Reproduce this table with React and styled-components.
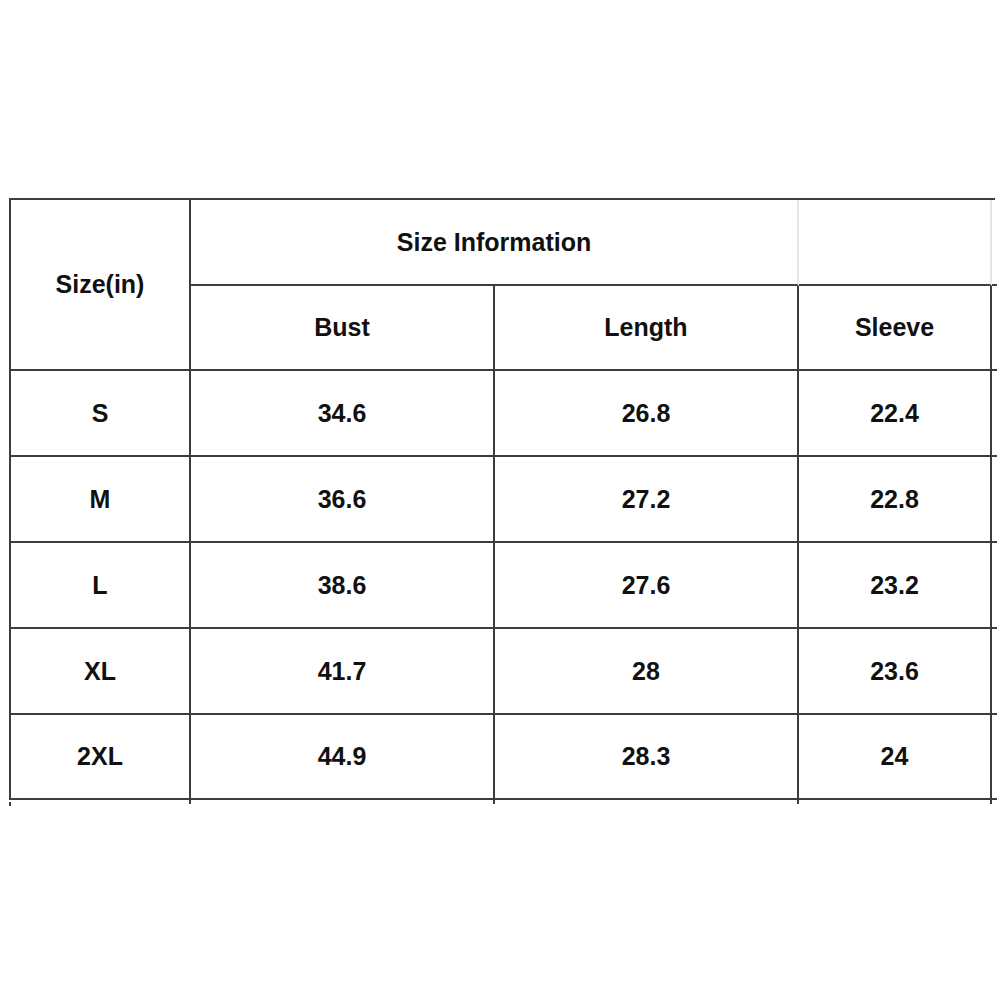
import React from 'react';
import styled, { createGlobalStyle } from 'styled-components';

const GlobalStyle = createGlobalStyle`
  html, body {
    margin: 0;
    padding: 0;
    background: #ffffff;
  }
  body {
    font-family: "Liberation Sans", Arial, sans-serif;
  }
`;

const LINE = '#3d3d3d';
const FAINT = '#e6e6e6';

const Page = styled.div`
  width: 1000px;
  height: 1000px;
  padding: 198px 0 0 9px;
  box-sizing: border-box;
  background: #fff;
`;

const Grid = styled.div`
  display: grid;
  grid-template-columns: 180px 304px 304px 193px;
  grid-template-rows: 86px 85px 86px 86px 86px 86px 85px;
  width: max-content;
  border-top: 2px solid ${LINE};
  border-left: 2px solid ${LINE};
  position: relative;
`;

const Cell = styled.div`
  position: relative;
  box-sizing: border-box;
  display: flex;
  align-items: center;
  justify-content: center;
  border-right: 2px solid ${(p) => (p.$faintRight ? FAINT : LINE)};
  border-bottom: 2px solid ${LINE};
  font-size: 25px;
  font-weight: 700;
  color: #111;
  grid-column: ${(p) => (p.$colSpan ? `span ${p.$colSpan}` : 'auto')};
  grid-row: ${(p) => (p.$rowSpan ? `span ${p.$rowSpan}` : 'auto')};

  /* little overhang of the row line past the right edge */
  ${(p) =>
    p.$last &&
    `
    &::after {
      content: '';
      position: absolute;
      right: -7px;
      bottom: -2px;
      width: 5px;
      height: 2px;
      background: ${LINE};
    }
  `}

  /* column lines run a few px below the last row */
  ${(p) =>
    p.$bottom &&
    `
    &::before {
      content: '';
      position: absolute;
      right: -2px;
      bottom: -6px;
      width: 2px;
      height: 4px;
      background: ${LINE};
    }
  `}
`;

const TopOverhang = styled.div`
  position: absolute;
  top: -2px;
  right: -3px;
  width: 3px;
  height: 2px;
  background: ${LINE};
`;

const LeftTail = styled.div`
  position: absolute;
  left: -2px;
  bottom: -6px;
  width: 2px;
  height: 4px;
  background: ${LINE};
`;

const rows = [
  ['S', '34.6', '26.8', '22.4'],
  ['M', '36.6', '27.2', '22.8'],
  ['L', '38.6', '27.6', '23.2'],
  ['XL', '41.7', '28', '23.6'],
  ['2XL', '44.9', '28.3', '24'],
];

export default function App() {
  return (
    <Page>
      <GlobalStyle />
      <Grid>
        <TopOverhang />
        <LeftTail />
        <Cell $rowSpan={2}>Size(in)</Cell>
        <Cell $colSpan={2} $faintRight>
          Size Information
        </Cell>
        <Cell $faintRight $last />
        <Cell>Bust</Cell>
        <Cell>Length</Cell>
        <Cell $last>Sleeve</Cell>
        {rows.map((r, i) =>
          r.map((v, j) => (
            <Cell
              key={`${i}-${j}`}
              $last={j === 3}
              $bottom={i === rows.length - 1}
            >
              {v}
            </Cell>
          ))
        )}
      </Grid>
    </Page>
  );
}
